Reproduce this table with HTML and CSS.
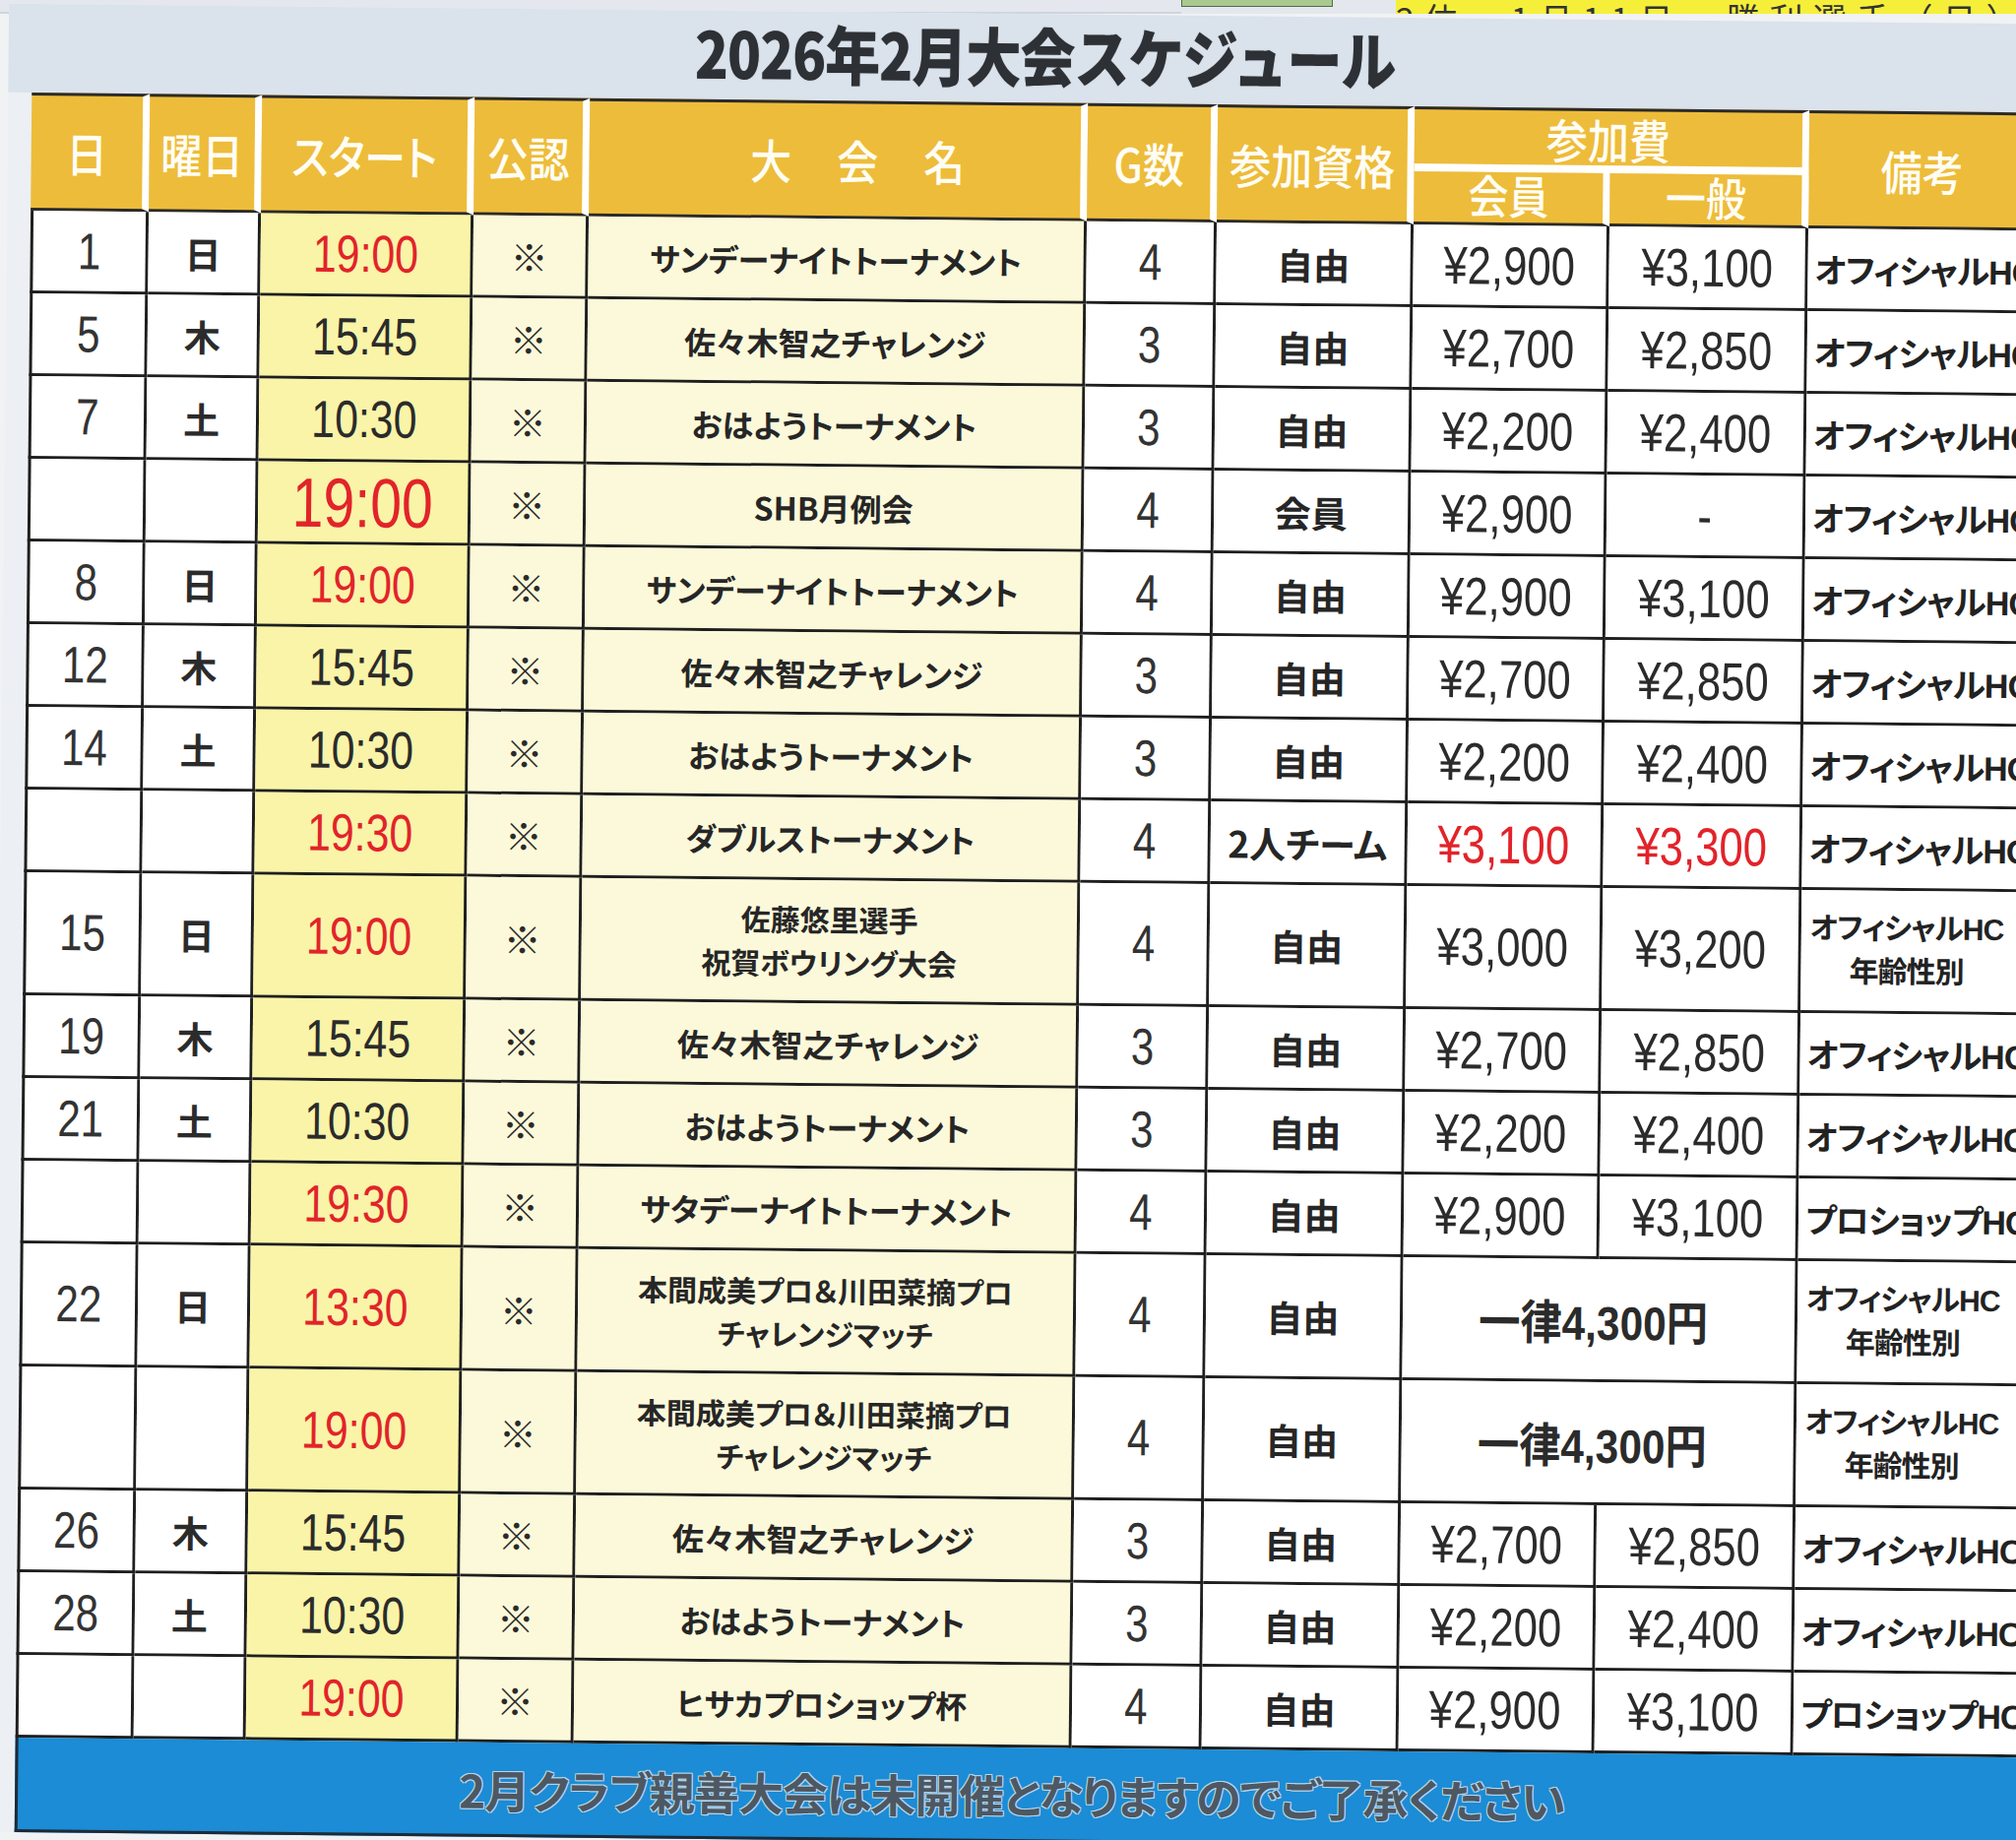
FILE: index.html
```html
<!DOCTYPE html>
<html lang="ja">
<head>
<meta charset="utf-8">
<title>2026年2月大会スケジュール</title>
<link rel="stylesheet" href="styles.css">
</head>
<body>
<div class="topstrip">
  <div class="ts-fill"></div>
  <div class="ts-green"></div>
  <div class="ts-gap"></div>
  <div class="ts-yellow"><span>2位　1月11日　勝利選手（日）</span></div>
</div>
<div class="sheet">
  <h1 class="title"><span>2026年2月大会スケジュール</span></h1>
  <table class="sched">
    <colgroup>
      <col class="c-day"><col class="c-wd"><col class="c-start"><col class="c-ok"><col class="c-name"><col class="c-g"><col class="c-q"><col class="c-p1"><col class="c-p2"><col class="c-rem">
    </colgroup>
    <thead>
      <tr class="h1">
        <th rowspan="2"><span>日</span></th>
        <th rowspan="2"><span>曜日</span></th>
        <th rowspan="2"><span>スタート</span></th>
        <th rowspan="2"><span>公認</span></th>
        <th rowspan="2" class="spaced"><span>大会名</span></th>
        <th rowspan="2"><span>G数</span></th>
        <th rowspan="2"><span>参加資格</span></th>
        <th colspan="2" class="fee"><span>参加費</span></th>
        <th rowspan="2" class="last"><span>備考</span></th>
      </tr>
      <tr class="h2">
        <th class="sub"><span>会員</span></th>
        <th class="sub"><span>一般</span></th>
      </tr>
    </thead>
    <tbody>
      <tr><td class="d"><span>1</span></td><td class="w">日</td><td class="t red"><span>19:00</span></td><td class="k">※</td><td class="n">サンデーナイトトーナメント</td><td class="g"><span>4</span></td><td class="q">自由</td><td class="p"><span>¥2,900</span></td><td class="p"><span>¥3,100</span></td><td class="r">オフィシャルHC</td></tr>
      <tr><td class="d"><span>5</span></td><td class="w">木</td><td class="t"><span>15:45</span></td><td class="k">※</td><td class="n">佐々木智之チャレンジ</td><td class="g"><span>3</span></td><td class="q">自由</td><td class="p"><span>¥2,700</span></td><td class="p"><span>¥2,850</span></td><td class="r">オフィシャルHC</td></tr>
      <tr><td class="d"><span>7</span></td><td class="w">土</td><td class="t"><span>10:30</span></td><td class="k">※</td><td class="n">おはようトーナメント</td><td class="g"><span>3</span></td><td class="q">自由</td><td class="p"><span>¥2,200</span></td><td class="p"><span>¥2,400</span></td><td class="r">オフィシャルHC</td></tr>
      <tr><td class="d"></td><td class="w"></td><td class="t red big"><span>19:00</span></td><td class="k">※</td><td class="n">SHB月例会</td><td class="g"><span>4</span></td><td class="q">会員</td><td class="p"><span>¥2,900</span></td><td class="p"><span>-</span></td><td class="r">オフィシャルHC</td></tr>
      <tr><td class="d"><span>8</span></td><td class="w">日</td><td class="t red"><span>19:00</span></td><td class="k">※</td><td class="n">サンデーナイトトーナメント</td><td class="g"><span>4</span></td><td class="q">自由</td><td class="p"><span>¥2,900</span></td><td class="p"><span>¥3,100</span></td><td class="r">オフィシャルHC</td></tr>
      <tr><td class="d"><span>12</span></td><td class="w">木</td><td class="t"><span>15:45</span></td><td class="k">※</td><td class="n">佐々木智之チャレンジ</td><td class="g"><span>3</span></td><td class="q">自由</td><td class="p"><span>¥2,700</span></td><td class="p"><span>¥2,850</span></td><td class="r">オフィシャルHC</td></tr>
      <tr><td class="d"><span>14</span></td><td class="w">土</td><td class="t"><span>10:30</span></td><td class="k">※</td><td class="n">おはようトーナメント</td><td class="g"><span>3</span></td><td class="q">自由</td><td class="p"><span>¥2,200</span></td><td class="p"><span>¥2,400</span></td><td class="r">オフィシャルHC</td></tr>
      <tr><td class="d"></td><td class="w"></td><td class="t red"><span>19:30</span></td><td class="k">※</td><td class="n">ダブルストーナメント</td><td class="g"><span>4</span></td><td class="q">2人チーム</td><td class="p red"><span>¥3,100</span></td><td class="p red"><span>¥3,300</span></td><td class="r">オフィシャルHC</td></tr>
      <tr class="tall"><td class="d"><span>15</span></td><td class="w">日</td><td class="t red"><span>19:00</span></td><td class="k">※</td><td class="n two">佐藤悠里選手<br>祝賀ボウリング大会</td><td class="g"><span>4</span></td><td class="q">自由</td><td class="p"><span>¥3,000</span></td><td class="p"><span>¥3,200</span></td><td class="r two">オフィシャルHC<br>年齢性別</td></tr>
      <tr><td class="d"><span>19</span></td><td class="w">木</td><td class="t"><span>15:45</span></td><td class="k">※</td><td class="n">佐々木智之チャレンジ</td><td class="g"><span>3</span></td><td class="q">自由</td><td class="p"><span>¥2,700</span></td><td class="p"><span>¥2,850</span></td><td class="r">オフィシャルHC</td></tr>
      <tr><td class="d"><span>21</span></td><td class="w">土</td><td class="t"><span>10:30</span></td><td class="k">※</td><td class="n">おはようトーナメント</td><td class="g"><span>3</span></td><td class="q">自由</td><td class="p"><span>¥2,200</span></td><td class="p"><span>¥2,400</span></td><td class="r">オフィシャルHC</td></tr>
      <tr><td class="d"></td><td class="w"></td><td class="t red"><span>19:30</span></td><td class="k">※</td><td class="n">サタデーナイトトーナメント</td><td class="g"><span>4</span></td><td class="q">自由</td><td class="p"><span>¥2,900</span></td><td class="p"><span>¥3,100</span></td><td class="r">プロショップHC</td></tr>
      <tr class="tall"><td class="d"><span>22</span></td><td class="w">日</td><td class="t red"><span>13:30</span></td><td class="k">※</td><td class="n two">本間成美プロ＆川田菜摘プロ<br>チャレンジマッチ</td><td class="g"><span>4</span></td><td class="q">自由</td><td class="p flat" colspan="2"><span>一律4,300円</span></td><td class="r two">オフィシャルHC<br>年齢性別</td></tr>
      <tr class="tall"><td class="d"></td><td class="w"></td><td class="t red"><span>19:00</span></td><td class="k">※</td><td class="n two">本間成美プロ＆川田菜摘プロ<br>チャレンジマッチ</td><td class="g"><span>4</span></td><td class="q">自由</td><td class="p flat" colspan="2"><span>一律4,300円</span></td><td class="r two">オフィシャルHC<br>年齢性別</td></tr>
      <tr><td class="d"><span>26</span></td><td class="w">木</td><td class="t"><span>15:45</span></td><td class="k">※</td><td class="n">佐々木智之チャレンジ</td><td class="g"><span>3</span></td><td class="q">自由</td><td class="p"><span>¥2,700</span></td><td class="p"><span>¥2,850</span></td><td class="r">オフィシャルHC</td></tr>
      <tr><td class="d"><span>28</span></td><td class="w">土</td><td class="t"><span>10:30</span></td><td class="k">※</td><td class="n">おはようトーナメント</td><td class="g"><span>3</span></td><td class="q">自由</td><td class="p"><span>¥2,200</span></td><td class="p"><span>¥2,400</span></td><td class="r">オフィシャルHC</td></tr>
      <tr><td class="d"></td><td class="w"></td><td class="t red"><span>19:00</span></td><td class="k">※</td><td class="n">ヒサカプロショップ杯</td><td class="g"><span>4</span></td><td class="q">自由</td><td class="p"><span>¥2,900</span></td><td class="p"><span>¥3,100</span></td><td class="r">プロショップHC</td></tr>
    </tbody>
  </table>
  <div class="notice"><span>2月クラブ親善大会は未開催となりますのでご了承ください</span></div>
</div>
</body>
</html>
```

FILE: styles.css
```css
html, body {
  margin: 0;
  padding: 0;
  width: 2048px;
  height: 1869px;
  overflow: hidden;
  background: #f1f2f4;
}

body {
  font-family: "Liberation Sans", "Noto Sans CJK JP", sans-serif;
  color: #2a2a2a;
}

/* strip of the previous section at the very top */
.topstrip {
  display: flex;
  height: 14px;
  background: #e4e8ee;
  overflow: hidden;
}
.ts-fill { width: 1200px; border-bottom: 2px solid #cfd5dc; }
.ts-green {
  width: 152px;
  height: 6px;
  background: #a9c98e;
  border: 1px solid #556b4a;
  border-top: none;
}
.ts-gap { width: 64px; }
.ts-yellow {
  flex: 1;
  height: 14px;
  background: #f6ef3a;
  overflow: hidden;
  display: flex;
  align-items: flex-end;
  justify-content: center;
}
.ts-yellow span {
  font-family: "Noto Sans CJK JP", sans-serif;
  font-size: 34px;
  line-height: 34px;
  margin-bottom: -22px;
  color: #333;
  letter-spacing: 10px;
}

.sheet {
  background: #eceff3;
  transform: rotate(0.57deg);
  transform-origin: 1024px 921px;
}

.title {
  margin: 0;
  height: 90px;
  box-sizing: border-box;
  padding: 0 0 10px 58px;
  display: flex;
  align-items: center;
  justify-content: center;
  background: #dae2ec;
  font-family: "Noto Sans CJK JP", sans-serif;
  font-weight: 900;
  font-size: 56px;
  color: #2d3034;
  letter-spacing: -1px;
  text-shadow: 0 0 1px #8a9096;
}
.title span {
  display: inline-block;
  transform: scaleY(1.16);
}

.sched {
  margin-left: 24px;
  table-layout: fixed;
  border-collapse: separate;
  border-spacing: 0;
  width: 2036px;
}

.c-day { width: 120px; }
.c-wd { width: 114px; }
.c-start { width: 216px; }
.c-ok { width: 117px; }
.c-name { width: 506px; }
.c-g { width: 132px; }
.c-q { width: 200px; }
.c-p1 { width: 199px; }
.c-p2 { width: 202px; }
.c-rem { width: 230px; }

/* header */
.sched th {
  background: #edbc3a;
  color: #fffdf4;
  font-family: "Noto Sans CJK JP", sans-serif;
  font-weight: 500;
  font-size: 42px;
  line-height: 1.1;
  padding: 0;
  white-space: nowrap;
  border-right: 7px solid #fff;
  border-bottom: 3px solid #2b2b2b;
  border-top: 3px solid #2b2b2b;
  font-feature-settings: "palt";
}
.sched th span {
  display: inline-block;
  transform: scaleY(1.14);
}
.sched th.last { border-right: none; }
.sched th.spaced { letter-spacing: 46px; text-indent: 46px; }
.sched th.fee { border-bottom: 8px solid #fff; vertical-align: bottom; padding-bottom: 4px; }
.sched th.sub { border-top: none; font-size: 41px; vertical-align: top; }
.sched tr.h1 { height: 66px; }
.sched tr.h2 { height: 54px; }

/* body */
.sched td {
  height: 84px;
  box-sizing: border-box;
  padding: 0;
  text-align: center;
  vertical-align: middle;
  border-right: 3px solid #1f1f1f;
  border-bottom: 3px solid #1f1f1f;
  background: #fff;
  white-space: nowrap;
  font-feature-settings: "palt";
}
.sched tr.tall td { height: 125px; }
.sched td:first-child { border-left: 3px solid #1f1f1f; }
.sched td.r { border-right: none; }

/* condensed figures, like the printed face */
.d span, .g span, .t span, .p span {
  display: inline-block;
  transform: scale(0.84, 1.04);
}

.d, .g {
  font-size: 50px;
  color: #333;
}
.w {
  font-family: "Noto Sans CJK JP", sans-serif;
  font-weight: 700;
  font-size: 37px;
  color: #2b2b2b;
}
.sched td.t {
  background: #f9f4a8;
  font-size: 51px;
  color: #2b2b2b;
}
.sched td.t.big { font-size: 68px; }
.sched td.k {
  background: #fcf9da;
  font-family: "Noto Sans CJK JP", sans-serif;
  font-size: 38px;
  font-weight: 700;
}
.sched td.n {
  background: #fcf9da;
  font-family: "Noto Sans CJK JP", sans-serif;
  font-weight: 700;
  font-size: 32px;
  color: #262626;
}
.sched td.n.two { font-size: 30px; line-height: 44px; }
.q {
  font-family: "Noto Sans CJK JP", sans-serif;
  font-weight: 700;
  font-size: 37px;
  color: #262626;
}
.p {
  font-size: 52px;
  color: #2b2b2b;
}
.sched td.flat {
  font-size: 46px;
  font-weight: 700;
  padding-right: 10px;
}
.sched td.flat span { transform: scale(0.92, 1.04); }
.sched td.r {
  text-align: left;
  padding-left: 7px;
  font-family: "Liberation Sans", "Noto Sans CJK JP", sans-serif;
  font-weight: 700;
  font-size: 34px;
  letter-spacing: -1px;
  color: #222;
}
.sched td.r.two {
  text-align: center;
  padding-left: 0;
  padding-right: 16px;
  font-size: 30px;
  line-height: 44px;
}

.red { color: #e2232a !important; }

.notice {
  margin-left: 24px;
  width: 2036px;
  height: 96px;
  box-sizing: border-box;
  background: #1b8cd5;
  border-left: 3px solid #1d2a38;
  border-bottom: 3px solid #1d2a38;
  display: flex;
  align-items: center;
  padding-left: 448px;
}
.notice span {
  font-family: "Noto Sans CJK JP", sans-serif;
  font-weight: 700;
  font-size: 46px;
  color: #4d5863;
  letter-spacing: -1px;
  font-feature-settings: "palt";
  text-shadow: -1px -1px 0 #b9d6ec, 1px 1px 0 #b9d6ec, 1px -1px 0 #b9d6ec, -1px 1px 0 #b9d6ec;
}
```
